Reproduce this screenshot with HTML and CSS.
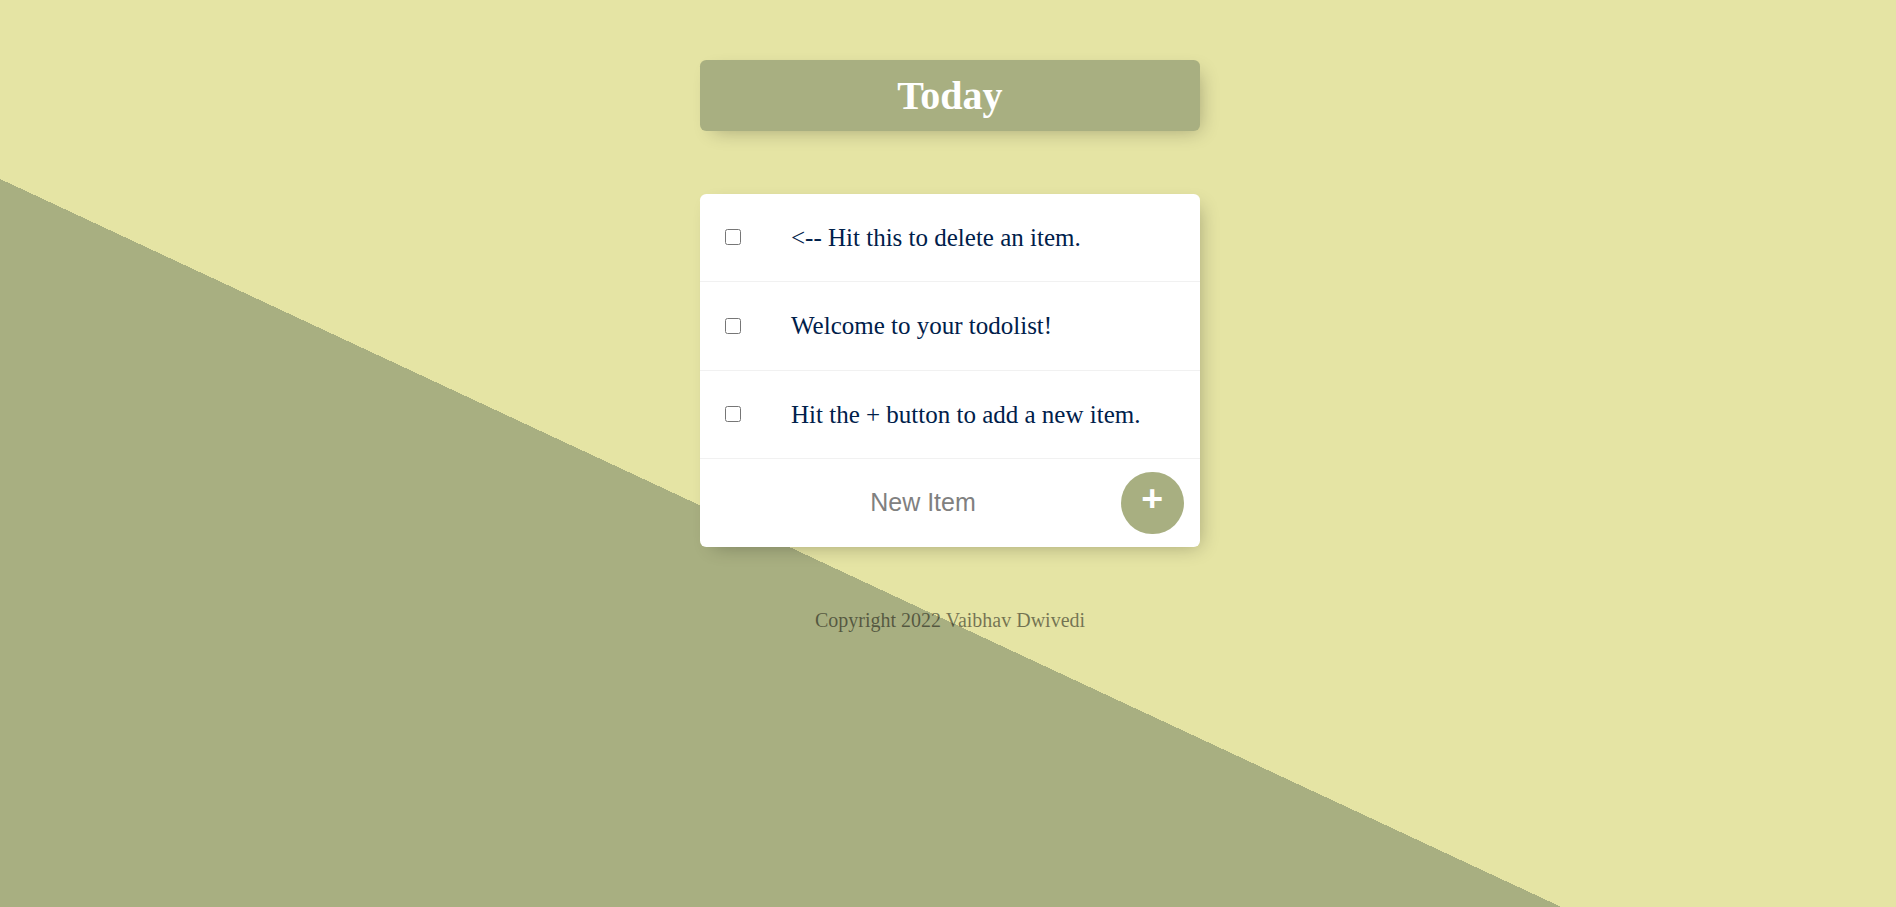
FILE: index.html
```html
<!DOCTYPE html>
<html lang="en">
<head>
<meta charset="utf-8">
<title>To Do List</title>
<link rel="stylesheet" href="styles.css">
</head>
<body>
  <div class="box heading">
    <h1>Today</h1>
  </div>
  <div class="box">
    <div class="item">
      <input type="checkbox" class="check">
      <p class="item-text">&lt;-- Hit this to delete an item.</p>
    </div>
    <div class="item">
      <input type="checkbox" class="check">
      <p class="item-text">Welcome to your todolist!</p>
    </div>
    <div class="item">
      <input type="checkbox" class="check">
      <p class="item-text">Hit the + button to add a new item.</p>
    </div>
    <form class="item new-item" action="#" onsubmit="return false;">
      <input type="text" class="new-input" name="newItem" placeholder="New Item" autocomplete="off">
      <button type="submit" class="add-btn">+</button>
    </form>
  </div>
  <footer class="footer">Copyright 2022 Vaibhav Dwivedi</footer>
</body>
</html>
```

FILE: styles.css
```css
html {
  background-color: #e5e4a4;
  background-image: linear-gradient(25deg, #a8af81 50%, #e5e4a4 50%);
  min-height: 1242px;
}

body {
  margin: 0 8px 10px 12px;
  font-family: "Liberation Serif", "Times New Roman", serif;
  font-size: 20px;
}

.box {
  max-width: 500px;
  margin: 62.5px auto;
  background: #ffffff;
  border-radius: 6.25px;
  box-shadow: 6.25px 6.25px 18.75px -6.25px rgba(0, 0, 0, 0.3);
}

.heading {
  margin-top: 60px;
  background-color: #a8af81;
  text-align: center;
}

.heading h1 {
  margin: 0;
  padding: 12.5px;
  font-size: 40px;
  font-weight: bold;
  line-height: 46px;
  color: #ffffff;
}

.item {
  min-height: 87.5px;
  display: flex;
  align-items: center;
  border-bottom: 1.25px solid #f1f1f1;
}

.item:last-child {
  border-bottom: 0;
}

.check {
  margin: 25px;
  width: 16px;
  height: 16px;
  flex: none;
}

.item-text {
  margin: 0;
  padding: 25px;
  font-size: 25px;
  line-height: 29px;
  color: #00204a;
}

.new-item {
  margin: 0 0 0 25px;
  text-align: center;
}

.new-input {
  text-align: center;
  height: 75px;
  width: 391px;
  padding: 1px 2.5px;
  border: none;
  background: transparent;
  font-family: "Liberation Sans", Arial, sans-serif;
  font-size: 25px;
  color: #000;
}

.new-input::placeholder {
  color: grey;
  opacity: 1;
}

.new-input:focus {
  outline: none;
}

.add-btn {
  min-height: 62.5px;
  width: 62.5px;
  border-radius: 50%;
  border: 0;
  background-color: #a8af81;
  color: #ffffff;
  font-family: "Liberation Sans", Arial, sans-serif;
  font-size: 37.5px;
  font-weight: bold;
  line-height: 1;
  padding: 0 0 7.5px 0;
  flex: none;
}

.footer {
  color: rgba(0, 0, 0, 0.5);
  text-align: center;
  font-size: 20px;
  line-height: 23px;
}
```
